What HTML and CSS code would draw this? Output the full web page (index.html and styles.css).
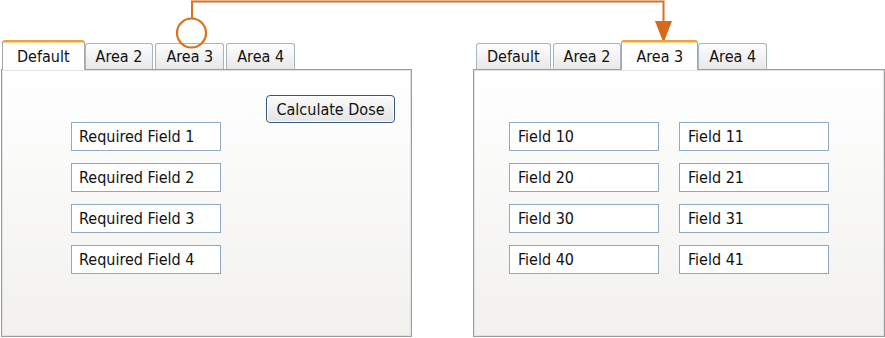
FILE: index.html
```html
<!DOCTYPE html>
<html>
<head>
<meta charset="utf-8">
<link rel="stylesheet" href="styles.css">
</head>
<body>
<div class="stage">
  <div class="tabset tabset-left">
    <div class="tabs">
      <div class="tab tab-active">Default</div>
      <div class="tab">Area 2</div>
      <div class="tab">Area 3</div>
      <div class="tab">Area 4</div>
    </div>
    <div class="panel panel-left">
      <div class="field-col">
        <div class="field">Required Field 1</div>
        <div class="field">Required Field 2</div>
        <div class="field">Required Field 3</div>
        <div class="field">Required Field 4</div>
      </div>
      <button class="btn">Calculate Dose</button>
    </div>
  </div>
  <div class="tabset tabset-right">
    <div class="tabs">
      <div class="tab">Default</div>
      <div class="tab">Area 2</div>
      <div class="tab tab-active">Area 3</div>
      <div class="tab">Area 4</div>
    </div>
    <div class="panel panel-right">
      <div class="field-grid">
        <div class="field">Field 10</div>
        <div class="field">Field 11</div>
        <div class="field">Field 20</div>
        <div class="field">Field 21</div>
        <div class="field">Field 30</div>
        <div class="field">Field 31</div>
        <div class="field">Field 40</div>
        <div class="field">Field 41</div>
      </div>
    </div>
  </div>
</div>
<svg class="connector" width="885" height="338" viewBox="0 0 885 338">
  <path d="M192 19 V1.5 H663.5 V22" fill="none" stroke="#d8721c" stroke-width="2"/>
  <circle cx="191.5" cy="33" r="14.5" fill="none" stroke="#d8721c" stroke-width="2.2"/>
  <polygon points="655,21 672,21 663.5,43" fill="#d6691a"/>
</svg>
</body>
</html>
```

FILE: styles.css
```css
html, body {
  margin: 0;
  padding: 0;
}
body {
  width: 885px;
  height: 338px;
  overflow: hidden;
  position: relative;
  background: #ffffff;
  font-family: "DejaVu Sans Condensed", "DejaVu Sans", Tahoma, sans-serif;
  font-size: 16px;
  color: #111;
}
.stage {
  display: flex;
  gap: 61px;
  padding: 40px 0 0 1px;
}
.tabset-left { width: 411px; }
.tabset-right { width: 412px; }

.tabs {
  display: flex;
  align-items: flex-start;
  gap: 2px;
  height: 30px;
  margin-bottom: -1px;
  padding-left: 3px;
}
.tab {
  box-sizing: border-box;
  height: 26px;
  margin-top: 3px;
  padding: 0 10px;
  line-height: 25px;
  border: 1px solid #a7b4c2;
  border-bottom: none;
  border-radius: 3px 3px 0 0;
  background: linear-gradient(#fdfdfd, #e8e8e8);
  white-space: nowrap;
}
.tab-active {
  position: relative;
  z-index: 1;
  height: 30px;
  margin: 0 -2px;
  padding: 0 14px;
  line-height: 30px;
  border-color: #a7a7a7;
  border-top: 2px solid #eda23a;
  box-shadow: inset 0 1px 0 #f7d79c;
  background: #ffffff;
}

.panel {
  box-sizing: border-box;
  height: 268px;
  border: 1px solid #9d9d9d;
  box-shadow: inset 0 0 0 1px #e2e2e2;
  background: linear-gradient(#ffffff, #f2f1ee);
}
.panel-left {
  display: flex;
  align-items: flex-start;
  padding: 52px 16px 0 69px;
}
.field-col {
  display: flex;
  flex-direction: column;
  gap: 12px;
}
.field {
  box-sizing: border-box;
  width: 150px;
  height: 29px;
  padding-left: 7px;
  line-height: 27px;
  border: 1px solid #8ea8c5;
  background: #ffffff;
  white-space: nowrap;
}
.btn {
  margin: -27px 0 0 auto;
  box-sizing: border-box;
  width: 129px;
  height: 28px;
  padding: 0;
  font-family: inherit;
  font-size: 16px;
  color: #111;
  border: 1px solid #33577a;
  border-radius: 4px;
  background: linear-gradient(#fbfbfb, #e4e4e4);
  box-shadow: inset 0 0 0 1px #ffffff;
}
.panel-right {
  padding: 52px 0 0 35px;
}
.field-grid {
  display: grid;
  grid-template-columns: 150px 150px;
  column-gap: 20px;
  row-gap: 12px;
}
.field-grid .field { padding-left: 8px; }

.connector {
  position: absolute;
  left: 0;
  top: 0;
  pointer-events: none;
}
```
